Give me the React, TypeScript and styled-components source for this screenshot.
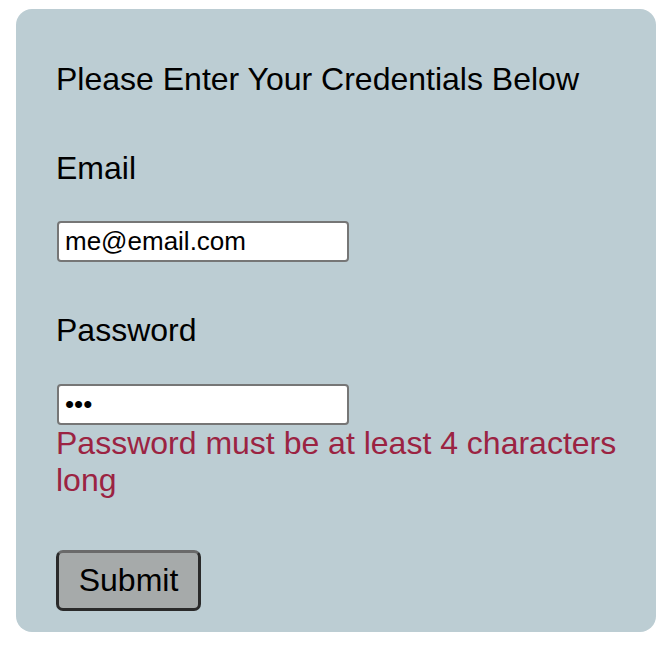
import React from 'react'
import styled, { createGlobalStyle } from 'styled-components'

const GlobalStyle = createGlobalStyle`
	html, body {
		margin: 0;
		padding: 0;
		background: #ffffff;
	}
	body {
		font-family: "Liberation Sans", Arial, sans-serif;
	}
`

const Page = styled.div`
	padding: 9px 8px 0 16px;
`

const Card = styled.form`
	width: 640px;
	box-sizing: border-box;
	background: #bccdd3;
	border-radius: 16px;
	padding: 52px 40px 21px;
	display: flex;
	flex-direction: column;
	align-items: flex-start;
`

const Heading = styled.h3`
	margin: 0 0 52px;
	font-size: 32px;
	font-weight: normal;
	line-height: normal;
	color: #000;
`

const Label = styled.label<{ $gap: number }>`
	display: block;
	font-size: 32px;
	line-height: normal;
	color: #000;
	margin-bottom: ${props => props.$gap}px;
`

const Input = styled.input`
	box-sizing: border-box;
	width: 292px;
	height: 41px;
	margin: 0 0 0 1px;
	padding: 0 4px 0 6px;
	border: 2px solid #767676;
	border-radius: 4px;
	background: #fff;
	font-family: "Liberation Sans", Arial, sans-serif;
	font-size: 26px;
	color: #000;
	outline: none;
`

const Field = styled.div<{ $bottom: number }>`
	display: flex;
	flex-direction: column;
	align-items: flex-start;
	margin-bottom: ${props => props.$bottom}px;
`

const ErrorText = styled.div`
	font-size: 32px;
	line-height: normal;
	color: #9b2342;
	width: 570px;
`

const SubmitButton = styled.button`
	box-sizing: border-box;
	width: 145px;
	height: 61px;
	margin: 0;
	padding: 0;
	border: 3px solid #2a2a2a;
	border-top-color: #6a6a6a;
	border-radius: 7px;
	background: #a6aaaa;
	font-family: "Liberation Sans", Arial, sans-serif;
	font-size: 32px;
	color: #000;
	cursor: pointer;
`

export const App = () => {
	const [email, setEmail] = React.useState('me@email.com')
	const [password, setPassword] = React.useState('abc')

	return (
		<Page>
			<GlobalStyle />
			<Card onSubmit={e => e.preventDefault()}>
				<Heading>Please Enter Your Credentials Below</Heading>
				<Field $bottom={50}>
					<Label htmlFor="email" $gap={34}>Email</Label>
					<Input id="email" type="email" value={email} onChange={e => setEmail(e.target.value)} />
				</Field>
				<Field $bottom={51}>
					<Label htmlFor="password" $gap={35}>Password</Label>
					<Input id="password" type="password" value={password} onChange={e => setPassword(e.target.value)} />
					{password.length < 4 && <ErrorText>Password must be at least 4 characters long</ErrorText>}
				</Field>
				<SubmitButton type="submit">Submit</SubmitButton>
			</Card>
		</Page>
	)
}

export default App
